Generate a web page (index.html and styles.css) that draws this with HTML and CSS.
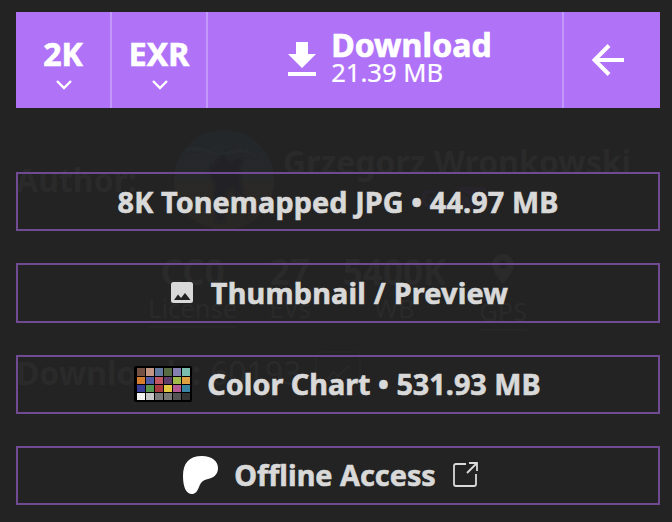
FILE: index.html
```html
<!DOCTYPE html>
<html lang="en">
<head>
<meta charset="utf-8">
<title>Download options</title>
<link rel="stylesheet" href="styles.css">
</head>
<body>
<div class="panel">
  <header class="download-bar">
    <button class="choice"><span>2K</span>
      <svg width="16" height="10" viewBox="0 0 16 10"><path d="M1 1l7 7 7-7" fill="none" stroke="#fff" stroke-width="2.4"/></svg></button>
    <button class="choice"><span>EXR</span>
      <svg width="16" height="10" viewBox="0 0 16 10"><path d="M1 1l7 7 7-7" fill="none" stroke="#fff" stroke-width="2.4"/></svg></button>
    <button class="download">
      <svg width="28" height="34" viewBox="0 0 28 34"><path d="M8 0h12v12h8L14 26 0 12h8zM0 30h28v4H0z" fill="#fff"/></svg>
      <span class="download-text"><strong>Download</strong><span>21.39 MB</span></span>
    </button>
    <button class="back">
      <svg width="32" height="32" viewBox="0 0 32 32"><path d="M32 16H3M17 1.500L2.500 16 17 30.500" fill="none" stroke="#fff" stroke-width="4"/></svg></button>
  </header>

  <div class="body">
    <section class="info" aria-hidden="true">
      <div class="author">
        <b>Author:</b>
        <svg class="avatar" width="100" height="100" viewBox="0 0 100 100">
          <defs>
            <linearGradient id="sky" x1="0" y1="0" x2="0" y2="1"><stop offset="0" stop-color="#23272a"/><stop offset=".45" stop-color="#26282a"/><stop offset=".56" stop-color="#2a2927"/><stop offset="1" stop-color="#292724"/></linearGradient>
            <filter id="soft"><feGaussianBlur stdDeviation="1.200"/></filter>
          </defs>
          <circle cx="50" cy="50" r="50" fill="url(#sky)"/>
          <g filter="url(#soft)">
            <path d="M12 20q14-3 24 2t22 0 24 4" fill="none" stroke="#272a2d" stroke-width="3"/>
            <path d="M44 30q4-9 10-3l1 7 7-7 6 2-2 17 9 46-11-32-2 32-3-35-6 4-2 31H41l-1-37-7-16z" fill="#232425"/>
          </g>
        </svg>
        <div class="author-name"><b>Grzegorz Wronkowski</b>
          <div class="links"><span>G</span><svg width="27" height="22" viewBox="0 0 27 22"><path d="M2 0h23q2 0 2 2v18q0 2-2 2H2q-2 0-2-2V2q0-2 2-2z" fill="#27252b"/><path d="M2 4l11.500 8L25 4" fill="none" stroke="#232323" stroke-width="2"/></svg></div>
        </div>
      </div>
      <div class="stats">
        <div class="linked"><b>CC0</b><span>License</span></div>
        <div><b>27</b><span>EVs</span></div>
        <div><b>5400K</b><span>WB</span></div>
        <div class="linked gps"><svg width="22" height="30" viewBox="0 0 22 30"><path fill-rule="evenodd" d="M11 0C5 0 0 4.700 0 10.500 0 18 11 30 11 30s11-12 11-19.500C22 4.700 17 0 11 0zm0 6.500a4 4 0 1 1 0 8 4 4 0 0 1 0-8z" fill="#2a2a2a"/></svg><span>GPS</span></div>
      </div>
      <div class="count"><b>Downloads:</b><span>60193</span>
        <i><svg width="24" height="16" viewBox="0 0 24 16"><path d="M1 14l7-7 4 4L23 1" fill="none" stroke="#292929" stroke-width="2"/></svg></i></div>
    </section>

    <nav class="options">
      <a class="option"><span>8K Tonemapped JPG • 44.97 MB</span></a>
      <a class="option thumb">
        <svg width="22" height="22" viewBox="0 0 22 22"><path fill-rule="evenodd" d="M2.500 0h17Q22 0 22 2.500v16q0 2.500-2.500 2.500h-17Q0 21 0 18.500v-16Q0 0 2.500 0zM3 18h16.500L14 11l-4 5-3-3.500z" fill="#d9d9d9"/></svg>
        <span>Thumbnail / Preview</span></a>
      <a class="option chart">
        <span class="swatches">
          <i class="c1"></i><i class="c2"></i><i class="c3"></i><i class="c4"></i><i class="c5"></i><i class="c6"></i>
          <i class="c7"></i><i class="c8"></i><i class="c9"></i><i class="c10"></i><i class="c11"></i><i class="c12"></i>
          <i class="c13"></i><i class="c14"></i><i class="c15"></i><i class="c16"></i><i class="c17"></i><i class="c18"></i>
          <i class="c19"></i><i class="c20"></i><i class="c21"></i><i class="c22"></i><i class="c23"></i><i class="c24"></i>
        </span>
        <span>Color Chart • 531.93 MB</span></a>
      <a class="option offline">
        <svg width="35" height="38" viewBox="0 0 35 38"><path d="M0 20C0 7 6 0 19 0c10 0 16 5 16 12 0 7-5 10-10 11-5 1-7 3-9 8-2 5-4 7-7 7-6 0-9-7-9-18z" fill="#fff"/></svg>
        <span>Offline Access</span>
        <svg class="external" width="25" height="25" viewBox="0 0 25 25"><path d="M13 2H3Q1 2 1 4v18q0 2 2 2h18q2 0 2-2V12M16 1h8v8M24 1L14 11" fill="none" stroke="#d9d9d9" stroke-width="1.800"/></svg></a>
    </nav>
  </div>
</div>
</body>
</html>
```

FILE: styles.css
```css
* { box-sizing: border-box; }
body {
  margin: 0;
  background: #232323;
  color: #d9d9d9;
  font-family: "Noto Sans", sans-serif;
  overflow: hidden;
}
svg { display: block; flex: none; }
.panel { height: 522px; padding: 12px 12px 0 16px; }

.download-bar { display: grid; grid-template-columns: 96px 96px 356px 96px; height: 96px; background: #b073f7; }
.download-bar button {
  display: flex;
  align-items: center;
  justify-content: center;
  border: 0;
  border-right: 2px solid #c397fb;
  padding: 0;
  background: none;
  color: #fff;
  font: inherit;
}
.download-bar .back { border-right: 0; padding-right: 8px; }
.download-bar .choice { flex-direction: column; padding: 0 0 0 2px; }
.choice span { height: 44px; margin-right: 2px; font-size: 32px; font-weight: 700; line-height: 44px; -webkit-text-stroke: 0.7px; }
.choice svg { margin-top: 4px; margin-bottom: -1px; }
.download-bar .download { padding: 0 0 2px 10px; }
.download svg { margin-right: 15px; }
.download-text { display: flex; flex-direction: column; text-align: left; }
.download-text strong { height: 28px; font-size: 32px; line-height: 26px; letter-spacing: 0.1px; -webkit-text-stroke: 0.7px; }
.download-text span { font-size: 25.6px; line-height: 26px; -webkit-text-stroke: 0.2px; }

.body { position: relative; height: 414px; }
.info { color: #2a2a2a; font-size: 32px; line-height: 44px; padding-top: 22px; }
.author { display: flex; height: 100px; width: 640px; }
.author > b { width: 158px; padding-top: 28px; }
.author-name { padding: 10px 0 0 9px; white-space: nowrap; }
.links { display: flex; align-items: center; gap: 22px; padding-left: 137px; color: #27252b; font-weight: 700; font-size: 24px; line-height: 22px; margin-top: 3px; }
.stats { display: flex; padding: 18px 0 0 132px; height: 118px; gap: 32px; }
.stats div { display: flex; flex-direction: column; align-items: center; }
.stats b { font-size: 35px; line-height: 48px; }
.stats span { font-size: 25.6px; line-height: 26px; }
.linked span { padding-bottom: 4px; border-bottom: 2px solid #272727; }
.stats .gps { padding: 6px 0 0 1px; }
.gps svg { margin-bottom: 15px; }
.count { display: flex; padding-top: 3px; }
.count span { margin-left: 9px; }
.count i { display: grid; place-items: center; width: 46px; height: 44px; margin-left: 13px; border: 2px solid #262626; border-radius: 6px; }

.options { position: absolute; inset: 64px 0 auto; display: flex; flex-direction: column; gap: 32px; }
.option {
  display: flex;
  align-items: center;
  justify-content: center;
  height: 59.333px;
  border: 2px solid #704b94;
  font-size: 28.8px;
  font-weight: 700;
  line-height: 40px;
  letter-spacing: 0.1px;
  white-space: nowrap;
  -webkit-text-stroke: 0.6px;
}
.thumb { gap: 18px; letter-spacing: 0.2px; padding-left: 3px; }
.chart { gap: 15px; letter-spacing: 0; padding-right: 1px; }
.offline { gap: 16px; letter-spacing: 0; padding: 0 15px 2px 0; }
.external { margin-left: 1px; }
.swatches {
  display: grid;
  grid-template-columns: repeat(6, 8px);
  grid-template-rows: repeat(4, 7.25px);
  gap: 1px;
  width: 58px;
  height: 36px;
  padding: 2px 2px 2px 3px;
  border-radius: 2px;
  background: #000;
}
.c1 { background: #735244; }
.c2 { background: #c29682; }
.c3 { background: #627a9d; }
.c4 { background: #576c43; }
.c5 { background: #8580b1; }
.c6 { background: #7abdaf; }
.c7 { background: #d67e2c; }
.c8 { background: #505ba6; }
.c9 { background: #bf5862; }
.c10 { background: #5e3c6c; }
.c11 { background: #a0bc4b; }
.c12 { background: #dfa041; }
.c13 { background: #383d96; }
.c14 { background: #559451; }
.c15 { background: #a8393f; }
.c16 { background: #e5c842; }
.c17 { background: #b45993; }
.c18 { background: #3785a3; }
.c19 { background: #f3f3f2; }
.c20 { background: #c8c8c8; }
.c21 { background: #7a7a7a; }
.c22 { background: #797a78; }
.c23 { background: #535353; }
.c24 { background: #343434; }
```
